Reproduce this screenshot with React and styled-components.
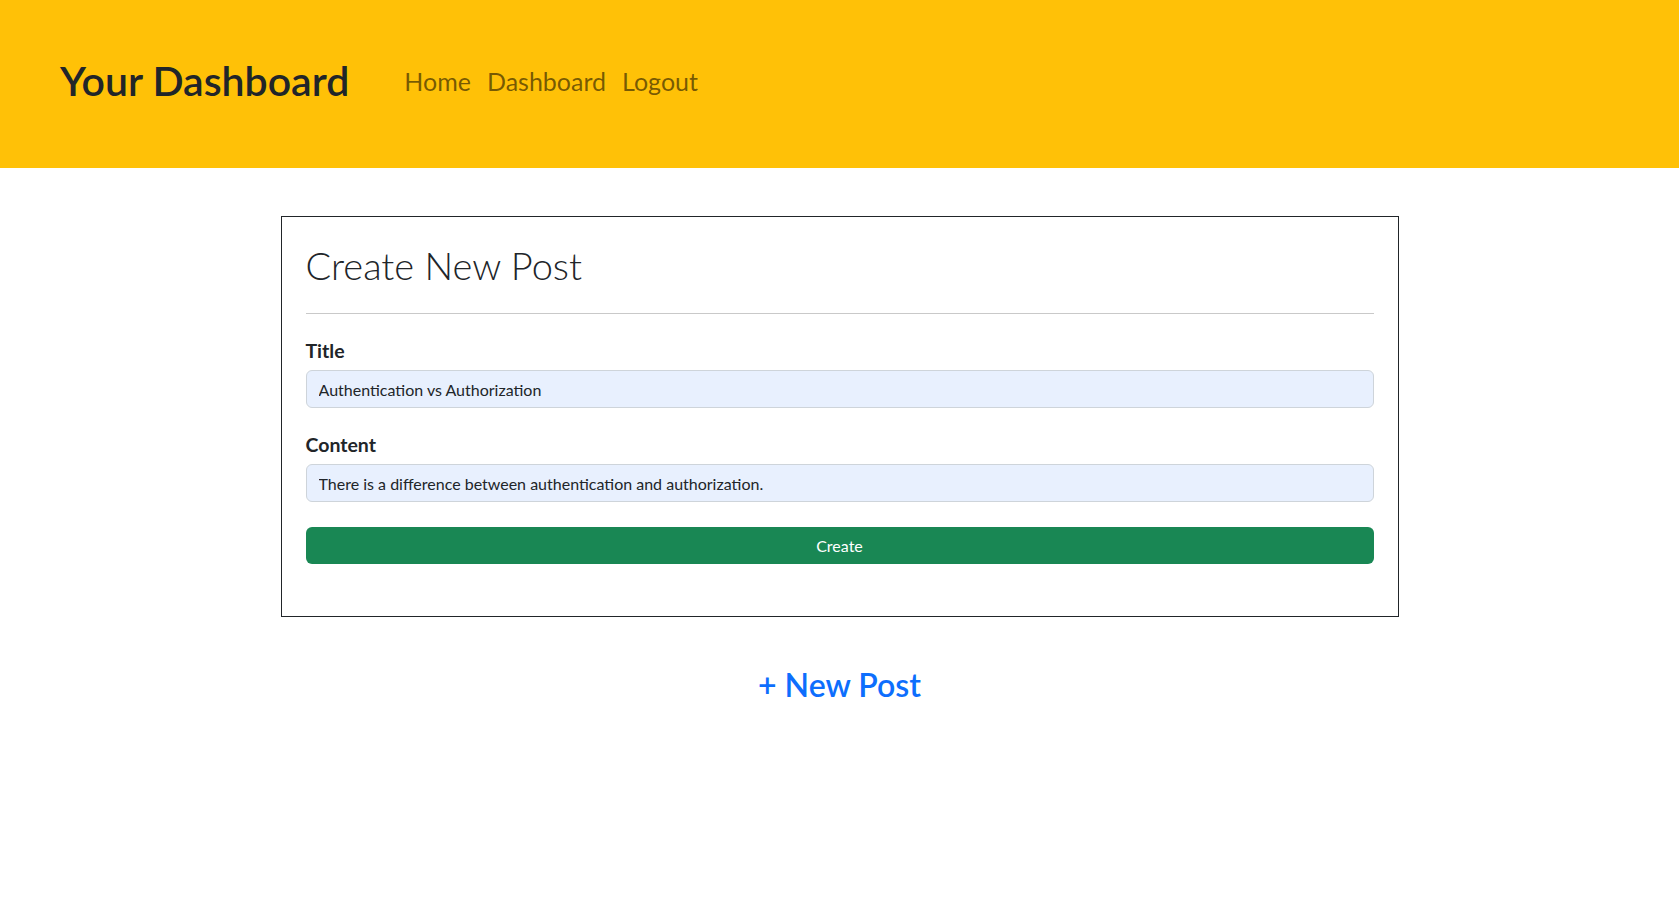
import React, { useState } from "react";
import styled, { createGlobalStyle } from "styled-components";

const GlobalStyle = createGlobalStyle`
  * { box-sizing: border-box; }
  body {
    margin: 0;
    background: #fff;
    color: #212529;
    font-family: Lato, "Open Sans", "Noto Sans", sans-serif;
  }
`;

const Header = styled.header`
  height: 168px;
  background: #ffc107;
  display: flex;
  align-items: center;
  padding: 0 60px 7px;
`;

const Brand = styled.h1`
  margin: 0 47px 0 0;
  font-size: 41px;
  font-weight: 600;
  line-height: 1.2;
  color: #212529;
`;

const Nav = styled.nav`
  display: flex;
  align-items: center;
  padding-top: 2px;
`;

const NavLink = styled.a`
  padding: 0 8px;
  font-size: 25px;
  line-height: 1.5;
  color: rgba(0, 0, 0, 0.55);
  text-decoration: none;
  cursor: pointer;
`;

const Main = styled.main`
  display: flex;
  flex-direction: column;
  align-items: center;
  padding-top: 48px;
`;

const Card = styled.section`
  width: 1118px;
  border: 1px solid #212529;
  padding: 24px 24px 52px;
`;

const Heading = styled.h2`
  margin: 0;
  font-size: 38px;
  font-weight: 300;
  line-height: 48px;
  color: #212529;
`;

const Divider = styled.hr`
  margin: 24px 0 25px;
  border: 0;
  border-top: 1px solid #c9c9c9;
`;

const Group = styled.div`
  margin-bottom: 25px;
`;

const Label = styled.label`
  display: block;
  margin-bottom: 7px;
  font-size: 19.5px;
  font-weight: 700;
  line-height: 24px;
  color: #212529;
`;

const Input = styled.input`
  display: block;
  width: 100%;
  height: 38px;
  padding: 6px 12px;
  font-family: inherit;
  font-size: 16px;
  line-height: 1.5;
  color: #212529;
  background: #e8f0fe;
  border: 1px solid #ced4da;
  border-radius: 6px;
  outline: none;
`;

const SubmitButton = styled.button`
  display: block;
  width: 100%;
  height: 37px;
  font-family: inherit;
  font-size: 16px;
  color: #fff;
  background: #198754;
  border: none;
  border-radius: 6px;
  cursor: pointer;
`;

const NewPostLink = styled.a`
  margin-top: 49px;
  font-size: 32px;
  font-weight: 600;
  line-height: 1.2;
  color: #0d6efd;
  text-decoration: none;
  cursor: pointer;
`;

export default function App() {
  const [formValue, setFormValue] = useState({
    title: "Authentication vs Authorization",
    content: "There is a difference between authentication and authorization.",
  });

  const handleChange = (event) =>
    setFormValue({ ...formValue, [event.target.name]: event.target.value });

  return (
    <>
      <GlobalStyle />
      <Header>
        <Brand>Your Dashboard</Brand>
        <Nav>
          <NavLink>Home</NavLink>
          <NavLink>Dashboard</NavLink>
          <NavLink>Logout</NavLink>
        </Nav>
      </Header>
      <Main>
        <Card>
          <Heading>Create New Post</Heading>
          <Divider />
          <Group>
            <Label htmlFor="title">Title</Label>
            <Input id="title" name="title" value={formValue.title} onChange={handleChange} />
          </Group>
          <Group>
            <Label htmlFor="content">Content</Label>
            <Input id="content" name="content" value={formValue.content} onChange={handleChange} />
          </Group>
          <SubmitButton type="button">Create</SubmitButton>
        </Card>
        <NewPostLink>+ New Post</NewPostLink>
      </Main>
    </>
  );
}
